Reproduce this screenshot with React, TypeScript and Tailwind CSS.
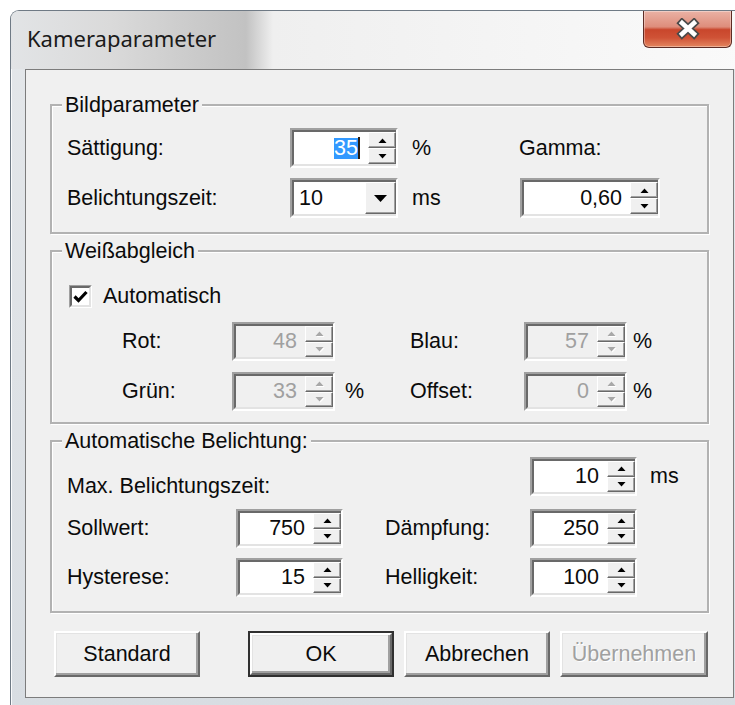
import type { ReactNode } from "react";

// Classic 3D edge presets (Windows "sunken" and "raised" looks)
const sunkenOuter = "border-2 border-t-[#a0a0a0] border-l-[#a0a0a0] border-b-white border-r-white";
const sunkenInnerNoRight =
  "border-2 border-r-0 border-t-[#696969] border-l-[#696969] border-b-[#e3e3e3]";
const raisedSmall =
  "border border-t-white border-l-white border-b-[#696969] border-r-[#696969] bg-[#f0f0f0] shadow-[inset_-1px_-1px_0_#a0a0a0]";

function Arrow({ up, disabled }: { up?: boolean; disabled?: boolean }) {
  return (
    <svg width="9" height="5" viewBox="0 0 9 5" className={disabled ? "drop-shadow-[1px_1px_0_#ffffff]" : ""}>
      <path
        d={up ? "M0.5 5 L4.5 0.5 L8.5 5 Z" : "M0.5 0 L4.5 4.5 L8.5 0 Z"}
        fill={disabled ? "#a8a8a8" : "#000"}
      />
    </svg>
  );
}

function SpinButton({ up, disabled }: { up?: boolean; disabled?: boolean }) {
  return (
    <div className={`${raisedSmall} flex flex-1 items-center justify-center`}>
      <Arrow up={up} disabled={disabled} />
    </div>
  );
}

interface SpinProps {
  value: string;
  className: string;
  disabled?: boolean;
  selected?: boolean;
}

function Spin({ value, className, disabled, selected }: SpinProps) {
  return (
    <div className={`${sunkenOuter} ${className}`}>
      <div className={`flex h-full ${sunkenInnerNoRight}`}>
        <div
          className={`flex flex-1 items-center justify-end pr-[8px] ${
            disabled ? "bg-[#f0f0f0] text-[#a0a0a0]" : "bg-white"
          }`}
        >
          {selected ? (
            <>
              <span className="bg-[#3399ff] leading-[21px] text-white">{value}</span>
              <span className="h-[22px] w-[2px] bg-[#2a1d10]" />
            </>
          ) : (
            value
          )}
        </div>
        <div className="flex w-[28px] flex-col">
          <SpinButton up disabled={disabled} />
          <SpinButton disabled={disabled} />
        </div>
      </div>
    </div>
  );
}

function Combo({ value, className }: { value: string; className: string }) {
  return (
    <div className={`${sunkenOuter} ${className}`}>
      <div className={`flex h-full ${sunkenInnerNoRight}`}>
        <div className="flex flex-1 items-center bg-white pl-[5px]">{value}</div>
        <div className={`${raisedSmall} flex w-[31px] items-center justify-center`}>
          <svg width="13" height="7" viewBox="0 0 13 7">
            <path d="M0 0 L13 0 L6.5 7 Z" fill="#000" />
          </svg>
        </div>
      </div>
    </div>
  );
}

function Checkbox() {
  return (
    <div className="h-[23px] w-[23px] border border-t-[#a0a0a0] border-l-[#a0a0a0] border-b-white border-r-white">
      <div className="flex h-full items-center justify-center border-2 border-t-[#696969] border-l-[#696969] border-b-[#e3e3e3] border-r-[#e3e3e3] bg-white">
        <svg width="15" height="13" viewBox="0 0 15 13">
          <path d="M1.5 6.5 L5.5 10.5 L13.5 2" stroke="#000" strokeWidth="3.2" fill="none" />
        </svg>
      </div>
    </div>
  );
}

function Group({ title, children }: { title: string; children: ReactNode }) {
  return (
    <div className="border-2 border-[#b2b2b2] shadow-[inset_1px_1px_0_#ffffff,1px_1px_0_#ffffff]">
      <div className="ml-[10px] -mt-[13px] w-fit bg-[#f0f0f0] px-[3px] leading-[24px]">{title}</div>
      {children}
    </div>
  );
}

interface PushButtonProps {
  label: string;
  className: string;
  isDefault?: boolean;
  disabled?: boolean;
}

function PushButton({ label, className, isDefault, disabled }: PushButtonProps) {
  const face = (
    <div className="flex h-full w-full items-center justify-center border-2 border-t-white border-l-white border-b-[#696969] border-r-[#696969] bg-[#f0f0f0] shadow-[inset_-2px_-2px_0_#a0a0a0,inset_1px_1px_0_#e3e3e3]">
      <span className={disabled ? "text-[#a0a0a0] [text-shadow:1px_1px_0_#ffffff]" : ""}>{label}</span>
    </div>
  );
  if (isDefault) {
    return <div className={`border-2 border-[#303030] ${className}`}>{face}</div>;
  }
  return <div className={className}>{face}</div>;
}

function CloseButton() {
  return (
    <div className="mr-[13px] flex h-[37px] w-[89px] items-center justify-center rounded-b-[6px] border border-t-0 border-[#5e2c25] bg-[linear-gradient(180deg,#eab2a5_0%,#de8d7b_44%,#c9462c_52%,#cf5236_74%,#e4865f_100%)] shadow-[inset_0_0_0_1px_rgba(255,255,255,0.35)]">
      <svg width="26" height="22" viewBox="0 0 26 22">
        <path d="M7 5 L19 16 M19 5 L7 16" stroke="#4a4a4a" strokeWidth="8" strokeLinecap="square" />
        <path d="M7 5 L19 16 M19 5 L7 16" stroke="#ffffff" strokeWidth="4.5" strokeLinecap="square" />
      </svg>
    </div>
  );
}

export default function App() {
  return (
    <div className="h-[705px] w-[735px] overflow-hidden bg-white pl-[10px] pt-[10px] font-['Liberation_Sans',Arial,sans-serif] text-[21.5px] text-[#0b0b0b]">
      <div className="h-[700px] w-[735px] overflow-hidden rounded-tl-[9px] border-l border-t border-[#6f7a85] bg-[linear-gradient(180deg,#e4e7ea,#d8dde2)] shadow-[inset_1px_1px_0_#fafbfc]">
        {/* title bar */}
        <div className="flex h-[58px] items-start justify-between bg-[linear-gradient(90deg,#e2e4e6_0px,#dadada_100px,#cdcdcd_170px,#c2c2c2_235px,#efefef_262px,#fafafa_100%)]">
          <div className="ml-[16px] mt-[13px] font-['Noto_Sans',sans-serif] text-[22px] leading-[28px] text-[#1a1a1a]">
            Kameraparameter
          </div>
          <CloseButton />
        </div>

        {/* client area */}
        <div className="ml-[14px] w-[709px] border border-[#7c7c7c] bg-[#f0f0f0] px-[24px] pb-[20px] pt-[34px]">
          <Group title="Bildparameter">
            <div className="mt-[11px] flex flex-col gap-[10px] pb-[14px] pl-[15px]">
              <div className="flex h-[40px] items-center">
                <span className="w-[223px]">Sättigung:</span>
                <Spin value="35" selected className="h-[40px] w-[108px]" />
                <span className="ml-[14px] w-[107px]">%</span>
                <span>Gamma:</span>
              </div>
              <div className="flex h-[40px] items-center">
                <span className="w-[223px]">Belichtungszeit:</span>
                <Combo value="10" className="h-[40px] w-[108px]" />
                <span className="ml-[14px] w-[108px]">ms</span>
                <Spin value="0,60" className="h-[40px] w-[140px]" />
              </div>
            </div>
          </Group>

          <div className="mt-[16px]">
            <Group title="Weißabgleich">
              <div className="mt-[21px] flex h-[24px] items-center pl-[17px]">
                <Checkbox />
                <span className="ml-[11px]">Automatisch</span>
              </div>
              <div className="mt-[14px] flex flex-col gap-[11px] pb-[11px] pl-[70px]">
                <div className="flex h-[39px] items-center">
                  <span className="w-[110px]">Rot:</span>
                  <Spin value="48" disabled className="h-[39px] w-[103px]" />
                  <span className="ml-[10px] w-[65px]" />
                  <span className="w-[114px]">Blau:</span>
                  <Spin value="57" disabled className="h-[39px] w-[103px]" />
                  <span className="ml-[6px]">%</span>
                </div>
                <div className="flex h-[39px] items-center">
                  <span className="w-[110px]">Grün:</span>
                  <Spin value="33" disabled className="h-[39px] w-[103px]" />
                  <span className="ml-[10px] w-[65px]">%</span>
                  <span className="w-[114px]">Offset:</span>
                  <Spin value="0" disabled className="h-[39px] w-[103px]" />
                  <span className="ml-[6px]">%</span>
                </div>
              </div>
            </Group>
          </div>

          <div className="mt-[16px]">
            <Group title="Automatische Belichtung:">
              <div className="mt-[4px] flex flex-col pb-[14px] pl-[15px]">
                <div className="flex h-[39px] items-end">
                  <span className="-mb-[2px] w-[463px] leading-[24px]">Max. Belichtungszeit:</span>
                  <Spin value="10" className="h-[39px] w-[107px]" />
                  <span className="ml-[13px] self-center">ms</span>
                </div>
                <div className="mt-[13px] flex h-[39px] items-center">
                  <span className="w-[169px]">Sollwert:</span>
                  <Spin value="750" className="h-[39px] w-[107px]" />
                  <span className="ml-[42px] w-[145px]">Dämpfung:</span>
                  <Spin value="250" className="h-[39px] w-[107px]" />
                </div>
                <div className="mt-[10px] flex h-[39px] items-center">
                  <span className="w-[169px]">Hysterese:</span>
                  <Spin value="15" className="h-[39px] w-[107px]" />
                  <span className="ml-[42px] w-[145px]">Helligkeit:</span>
                  <Spin value="100" className="h-[39px] w-[107px]" />
                </div>
              </div>
            </Group>
          </div>

          <div className="mt-[18px] flex h-[46px]">
            <PushButton label="Standard" className="ml-[4px] h-[46px] w-[146px]" />
            <PushButton label="OK" isDefault className="ml-[48px] h-[46px] w-[146px]" />
            <PushButton label="Abbrechen" className="ml-[10px] h-[46px] w-[146px]" />
            <PushButton label="Übernehmen" disabled className="ml-[10px] h-[46px] w-[148px]" />
          </div>
        </div>
      </div>
    </div>
  );
}
